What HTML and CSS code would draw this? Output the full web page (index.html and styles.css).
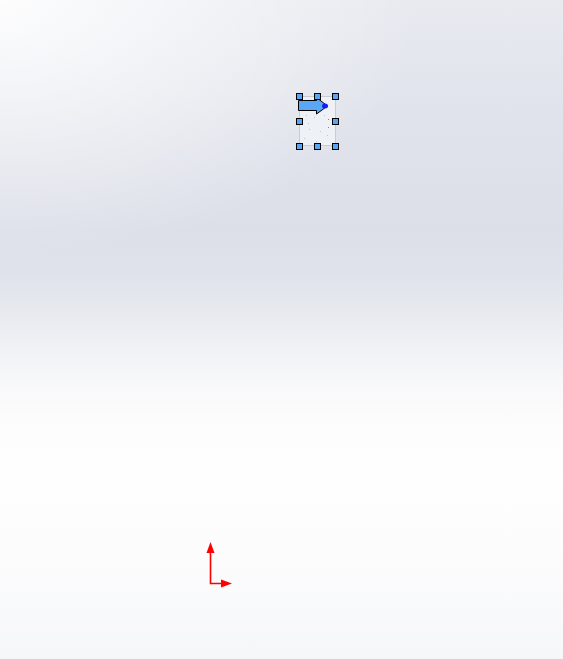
FILE: index.html
```html
<!DOCTYPE html>
<html>
<head>
<meta charset="utf-8">
<link rel="stylesheet" href="styles.css">
</head>
<body>
<div class="viewport">
  <div class="note-box">
    <svg class="note" width="50" height="64" viewBox="0 0 50 64">
      <rect x="5.5" y="5.5" width="36" height="49" fill="#eef2f7" stroke="#c9ccd2" stroke-width="1"/>
      <g fill="#b9c6d6">
        <rect x="12" y="24" width="1" height="1"/><rect x="20" y="26" width="1" height="1"/>
        <rect x="30" y="24" width="1" height="1"/><rect x="14" y="32" width="1" height="1"/>
        <rect x="15" y="38" width="1" height="1"/><rect x="26" y="40" width="1" height="1"/>
        <rect x="33" y="44" width="1" height="1"/><rect x="10" y="47" width="1" height="1"/>
        <rect x="22" y="50" width="1" height="1"/>
      </g>
      <rect x="34" y="36" width="1" height="1" fill="#7c8796"/>
      <rect x="34" y="28" width="1" height="1" fill="#7c8796"/>
      <path d="M4.5 9.5 H22.5 V6.5 L33.5 15 L22.5 23 V19.5 H4.5 Z" fill="#5aa8f5" stroke="#000" stroke-width="1"/>
      <ellipse cx="31" cy="15" rx="3" ry="2.5" fill="#1a1aff"/>
      <g fill="#56a6f5" stroke="#000" stroke-width="1">
        <rect x="2.5" y="2.5" width="6" height="6"/>
        <rect x="20.5" y="2.5" width="6" height="6"/>
        <rect x="38.5" y="2.5" width="6" height="6"/>
        <rect x="2.5" y="27.5" width="6" height="6"/>
        <rect x="38.5" y="27.5" width="6" height="6"/>
        <rect x="2.5" y="52.5" width="6" height="6"/>
        <rect x="20.5" y="52.5" width="6" height="6"/>
        <rect x="38.5" y="52.5" width="6" height="6"/>
      </g>
    </svg>
  </div>
  <svg class="triad" width="30" height="50" viewBox="0 0 30 50">
    <path d="M7.5 9 V41.5 H20" fill="none" stroke="#ff0000" stroke-width="1.6"/>
    <path d="M7.5 0 L11.5 11 L3.5 11 Z" fill="#ff0000"/>
    <path d="M29 41.5 L18 37.5 L18 45.5 Z" fill="#ff0000"/>
  </svg>
</div>
</body>
</html>
```
FILE: styles.css
```css
html, body {
  margin: 0;
  padding: 0;
  width: 563px;
  height: 659px;
  overflow: hidden;
}
.viewport {
  position: relative;
  width: 563px;
  height: 659px;
  background:
    radial-gradient(ellipse 420px 260px at 0px 0px, rgba(255,255,255,0.9), rgba(255,255,255,0) 100%),
    linear-gradient(to bottom,
      #e8eaf0 0px,
      #e0e3eb 120px,
      #dcdfe8 230px,
      #dfe2ea 270px,
      #e7e9ef 310px,
      #f1f2f5 350px,
      #f9f9fb 390px,
      #fdfdfd 430px,
      #fefefe 480px,
      #fcfcfd 560px,
      #f6f7f9 659px);
}
.note-box {
  position: absolute;
  left: 294px;
  top: 91px;
}
.note {
  display: block;
}
.triad {
  position: absolute;
  left: 203px;
  top: 542px;
}
```
